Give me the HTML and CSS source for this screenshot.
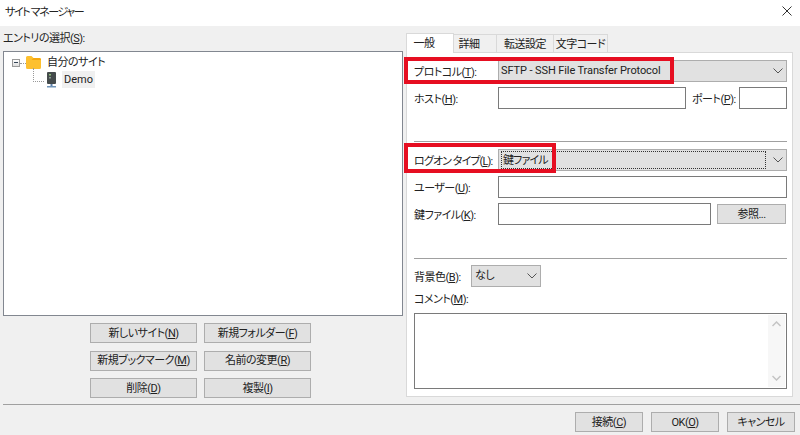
FILE: index.html
```html
<!DOCTYPE html>
<html lang="ja">
<head>
<meta charset="utf-8">
<title>サイト マネージャー</title>
<link rel="stylesheet" href="styles.css">
</head>
<body>
<div class="window">
  <header class="titlebar">
    <span class="title-text">サイト マネージャー</span>
    <svg class="close" width="10" height="10" viewBox="0 0 10 10"><path d="M0.500 0.500L9.500 9.500M9.500 0.500L0.500 9.500" stroke="#333" stroke-width="1" fill="none"/></svg>
  </header>
  <main class="content">
    <section class="left">
      <div class="entry-label">エントリの選択(<u>S</u>):</div>
      <div class="tree">
        <div class="tree-row">
          <span class="expander"></span>
          <span class="dash"></span>
          <svg class="folder" width="15" height="13" viewBox="0 0 15 13"><path d="M0 1.500Q0 0 1.500 0H5.500L7.500 2H13.500Q15 2 15 3.500V11.500Q15 13 13.500 13H1.500Q0 13 0 11.500Z" fill="#fdc02f"/><path d="M0 4H15V3.500Q15 2 13.500 2H7.500L5.500 4Z" fill="#f5a80f"/></svg>
          <span class="tree-text">自分のサイト</span>
        </div>
        <div class="tree-row child">
          <span class="elbow"></span>
          <svg class="server" width="9" height="16" viewBox="0 0 9 16"><rect x="0" y="0" width="9" height="12" rx="1" fill="#454b4c"/><rect x="2" y="2" width="2" height="1.500" fill="#8fbf7a"/><rect x="2" y="5" width="2" height="1.500" fill="#8a9a90"/><rect x="3.500" y="12" width="2" height="2" fill="#5a7fa8"/><rect x="0" y="14" width="9" height="1.500" fill="#6f93b8"/></svg>
          <span class="tree-text selected latin">Demo</span>
        </div>
      </div>
      <div class="action-grid">
        <button class="btn">新しいサイト(<u>N</u>)</button>
        <button class="btn">新規フォルダー(<u>F</u>)</button>
        <button class="btn">新規ブックマーク(<u>M</u>)</button>
        <button class="btn">名前の変更(<u>R</u>)</button>
        <button class="btn">削除(<u>D</u>)</button>
        <button class="btn">複製(<u>I</u>)</button>
      </div>
    </section>
    <section class="right">
      <nav class="tabs">
        <div class="tab active">一般</div>
        <div class="tab t2">詳細</div>
        <div class="tab t3">転送設定</div>
        <div class="tab t4">文字コード</div>
      </nav>
      <div class="panel">
        <div class="row r-protocol">
          <label class="lbl">プロトコル(<u>T</u>):</label>
          <div class="select grow"><span class="latin sftp">SFTP - SSH File Transfer Protocol</span><svg class="chev" width="10" height="6" viewBox="0 0 10 6"><path d="M0.500 0.500L5 5L9.500 0.500" stroke="#555" fill="none"/></svg></div>
        </div>
        <div class="row r-host">
          <label class="lbl">ホスト(<u>H</u>):</label>
          <div class="input grow"></div>
          <label class="lbl-port">ポート(<u>P</u>):</label>
          <div class="input port"></div>
        </div>
        <hr class="sep s1">
        <div class="row r-logon">
          <label class="lbl tight">ログオン タイプ(<u>L</u>):</label>
          <div class="select grow focus"><span class="focus-box"><span class="tight">鍵ファイル</span></span><svg class="chev" width="10" height="6" viewBox="0 0 10 6"><path d="M0.500 0.500L5 5L9.500 0.500" stroke="#555" fill="none"/></svg></div>
        </div>
        <div class="row r-user">
          <label class="lbl">ユーザー(<u>U</u>):</label>
          <div class="input grow"></div>
        </div>
        <div class="row r-key">
          <label class="lbl">鍵ファイル(<u>K</u>):</label>
          <div class="input grow"></div>
          <button class="btn browse">参照...</button>
        </div>
        <hr class="sep s2">
        <div class="row r-bg">
          <label class="lbl-bg">背景色(<u>B</u>):</label>
          <div class="select bg"><span>なし</span><svg class="chev" width="10" height="6" viewBox="0 0 10 6"><path d="M0.500 0.500L5 5L9.500 0.500" stroke="#555" fill="none"/></svg></div>
        </div>
        <div class="comment-label">コメント(<u>M</u>):</div>
        <div class="comment">
          <div class="scroll">
            <svg width="9" height="6" viewBox="0 0 9 6"><path d="M0.500 5L4.500 1L8.500 5" stroke="#c4c4c4" stroke-width="1.500" fill="none"/></svg>
            <svg width="9" height="6" viewBox="0 0 9 6"><path d="M0.500 1L4.500 5L8.500 1" stroke="#c4c4c4" stroke-width="1.500" fill="none"/></svg>
          </div>
        </div>
      </div>
    </section>
  </main>
  <footer class="footer">
    <button class="btn foot">接続(<u>C</u>)</button>
    <button class="btn foot">OK(<u>O</u>)</button>
    <button class="btn foot">キャンセル</button>
  </footer>
  <div class="mark m1"></div>
  <div class="mark m2"></div>
</div>
</body>
</html>
```
FILE: styles.css
```css
* { box-sizing: border-box; }
html, body { margin: 0; padding: 0; }
body { width: 800px; height: 435px; overflow: hidden; background: #f0f0f0; }
.window {
  position: relative;
  width: 800px;
  height: 435px;
  display: flex;
  flex-direction: column;
  font-family: Roboto, "Noto Sans CJK JP", sans-serif;
  font-size: 11px;
  font-feature-settings: "palt";
  letter-spacing: -0.5px;
  color: #222;
  background: #f0f0f0;
  white-space: nowrap;
}
.latin { letter-spacing: 0; }
.sftp { letter-spacing: -0.1px; }
.tight { letter-spacing: -0.9px; }
u { text-underline-offset: 1px; }
.titlebar {
  height: 26px;
  flex: none;
  background: #fff;
  display: flex;
  align-items: center;
  justify-content: space-between;
  padding: 0 8px 4px 5px;
}
.title-text { letter-spacing: -1.4px; }
.close { flex: none; }
.content { display: flex; height: 378px; flex: none; }
.left { width: 400px; margin-left: 3px; flex: none; }
.entry-label { height: 25px; line-height: 26px; }
.tree {
  height: 265px;
  background: #fff;
  border: 1px solid #828790;
  padding: 1px 0 0 7px;
}
.tree-row { display: flex; align-items: center; height: 18px; }
.expander {
  width: 8px; height: 8px; border: 1px solid #9a9a9a; background: linear-gradient(#fff, #ddd);
  position: relative; flex: none; margin-left: 1px; margin-top: 2px;
}
.expander::after { content: ""; position: absolute; left: 1px; right: 1px; top: 2px; height: 1px; background: #345; }
.dash { width: 6px; border-top: 1px dotted #999; flex: none; margin-top: 2px; }
.folder { flex: none; margin-right: 6px; }
.tree-text { line-height: 19px; }
.child { height: 17px; }
.elbow {
  width: 11px; height: 14px; margin: -3px 3px 0 22px; flex: none; align-self: flex-start;
  border-left: 1px dotted #999; border-bottom: 1px dotted #999;
}
.server { flex: none; margin-right: 6px; }
.selected { background: #f0f0f0; padding: 0 2px; line-height: 17px; }
.action-grid {
  display: grid;
  grid-template-columns: 107px 107px;
  grid-auto-rows: 20px;
  gap: 7.5px 7px;
  margin: 7px 0 0 87px;
}
.btn {
  font: inherit;
  font-feature-settings: inherit;
  letter-spacing: inherit;
  color: inherit;
  padding: 1px 0 0;
  background: #e1e1e1;
  border: 1px solid #adadad;
  white-space: nowrap;
  line-height: 16px;
}
.right { width: 387px; margin-left: 3px; flex: none; }
.tabs { display: flex; height: 26px; padding-top: 6px; align-items: flex-end; }
.tab {
  height: 18px;
  line-height: 19px;
  text-align: center;
  background: #f0f0f0;
  border: 1px solid #d9d9d9;
  border-bottom: none;
  margin-left: -1px;
}
.tab.active { width: 48px; height: 20px; margin-left: 0; padding-right: 12px; background: #fff; line-height: 20px; position: relative; z-index: 1; margin-bottom: -1px; }
.t2 { width: 44px; padding-right: 12px; }
.t3 { width: 58px; }
.t4 { width: 55px; }
.panel {
  height: 345px;
  background: #fff;
  border: 1px solid #d9d9d9;
  padding: 7px 5px 0 7px;
}
.row { display: flex; align-items: center; height: 22px; }
.lbl { width: 84px; flex: none; }
.lbl-port { width: 53px; flex: none; padding-left: 6px; }
.lbl-bg { width: 57px; flex: none; }
.grow { flex: 1; min-width: 0; }
.input { height: 22px; background: #fff; border: 1px solid #7a7a7a; }
.port { width: 48px; flex: none; }
.select {
  height: 22px;
  background: #e1e1e1;
  border: 1px solid #adadad;
  display: flex;
  align-items: center;
  justify-content: space-between;
  padding: 0 3px 0 2px;
  line-height: 18px;
}
.chev { flex: none; }
.r-host { margin-top: 5px; }
.sep { border: none; border-top: 1px solid #a0a0a0; margin: 0; height: 0; }
.s1 { margin-top: 32px; }
.r-logon { margin-top: 7px; }
.focus-box {
  flex: 1;
  border: 1px dotted #333;
  height: 18px;
  margin-right: 7px;
  padding-left: 1px;
  line-height: 18px;
}
.r-user { margin-top: 5px; }
.r-key { margin-top: 5px; }
.browse { width: 69px; height: 20px; margin: 0 1px 0 6px; flex: none; }
.s2 { margin-top: 33px; }
.r-bg { margin-top: 6px; }
.bg { width: 70px; padding-left: 3px; }
.comment-label { height: 18px; line-height: 18px; margin-top: 4px; margin-bottom: 4px; }
.comment {
  height: 76px;
  border: 1px solid #7a7a7a;
  background: #fff;
  display: flex;
  justify-content: flex-end;
}
.scroll {
  width: 17px;
  background: #f7f7f7;
  display: flex;
  flex-direction: column;
  justify-content: space-between;
  align-items: center;
  padding: 6px 0;
  margin: 1px;
}
.footer {
  flex: 1;
  margin-left: 3px;
  border-top: 1px solid #a0a0a0;
  display: flex;
  justify-content: flex-end;
  gap: 8px;
  padding: 7px 5px 0 0;
}
.foot { width: 68px; height: 20px; }
.mark { position: absolute; border: 4px solid #e60e21; pointer-events: none; }
.m1 { left: 404px; top: 57px; width: 270px; height: 27px; }
.m2 { left: 404px; top: 143px; width: 152px; height: 30px; }
```
